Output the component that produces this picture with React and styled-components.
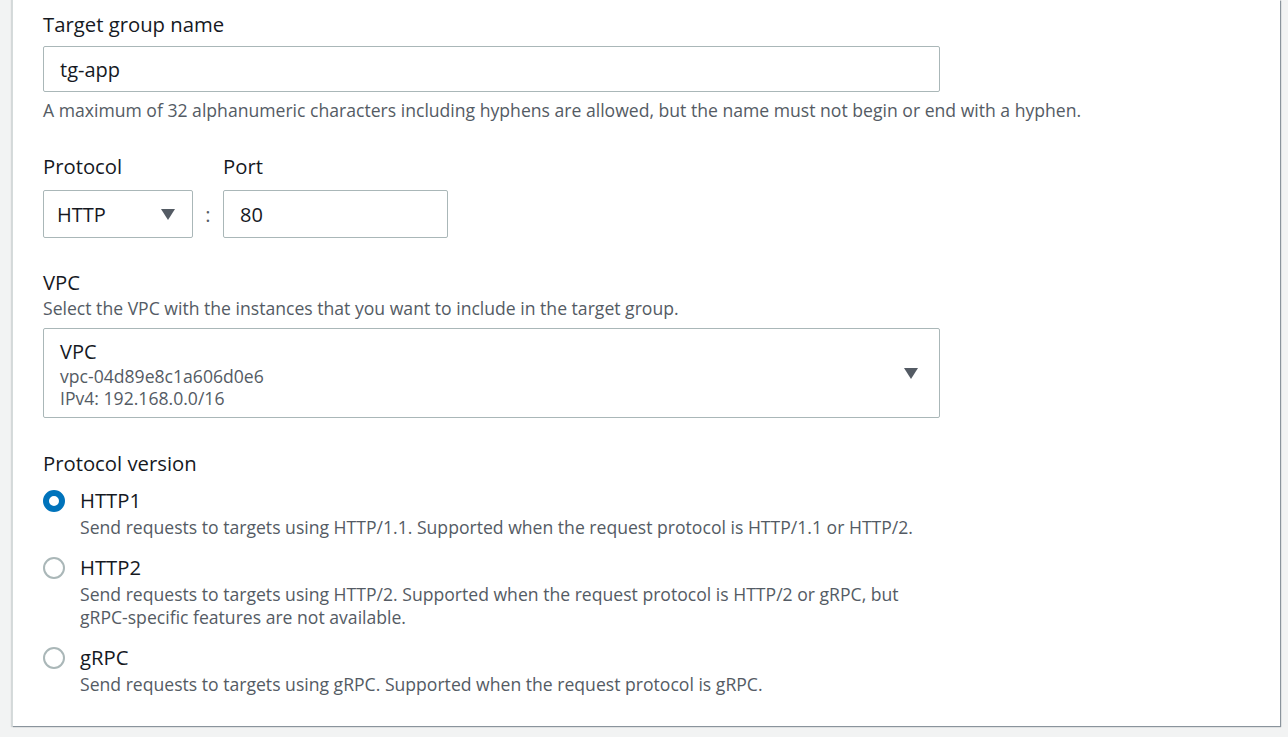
import styled, { createGlobalStyle } from "styled-components";

const Global = createGlobalStyle`
  html, body {
    margin: 0;
    padding: 0;
    background: #f2f3f3;
    font-family: "Open Sans", "Noto Sans", sans-serif;
    color: #16191f;
  }
`;

const Page = styled.div`
  width: 1288px;
  height: 737px;
  overflow: hidden;
  padding: 0 8px 0 12px;
  box-sizing: border-box;
`;

const Card = styled.section`
  background: #fff;
  border-left: 1px solid #d5dbdb;
  box-shadow: 1px 1px 1px 0 rgba(0, 22, 43, 0.35), 0 0 1px 1px rgba(0, 28, 36, 0.12);
  padding: 10px 30px 30px;
  display: flex;
  flex-direction: column;
`;

const Field = styled.div`
  display: flex;
  flex-direction: column;
  margin-bottom: ${(p) => p.$gap || 0}px;
`;

const Label = styled.div`
  font-size: 20.3px;
  line-height: 28px;
  color: #16191f;
  width: ${(p) => (p.$w ? `${p.$w}px` : "auto")};
`;

const Hint = styled.div`
  font-size: 17.6px;
  line-height: 23px;
  color: #545b64;
  margin-top: ${(p) => p.$mt || 0}px;
`;

const TextBox = styled.div`
  width: ${(p) => p.$w}px;
  height: ${(p) => p.$h}px;
  box-sizing: border-box;
  border: 1px solid #aab7b8;
  border-radius: 2px;
  padding: 0 16px;
  display: flex;
  align-items: center;
  font-size: 20px;
  color: #16191f;
  margin-top: ${(p) => p.$mt || 0}px;
  margin-bottom: ${(p) => p.$mb || 0}px;
`;

const Row = styled.div`
  display: flex;
`;

const InputRow = styled.div`
  display: flex;
  align-items: center;
  margin-top: 10px;
`;

const Colon = styled.span`
  width: 30px;
  text-align: center;
  font-size: 20px;
  color: #545b64;
`;

const SelectBox = styled(TextBox)`
  justify-content: space-between;
  padding: 0 16px 0 13px;
`;

const Caret = styled.svg`
  width: 16px;
  height: 14px;
  fill: #545b64;
  flex: none;
`;

const VpcBox = styled.div`
  width: 897px;
  height: 90px;
  box-sizing: border-box;
  border: 1px solid #aab7b8;
  border-radius: 2px;
  padding: 0 20px 0 16px;
  display: flex;
  align-items: center;
  justify-content: space-between;
  margin-top: 8px;
  margin-bottom: 31px;
`;

const VpcText = styled.div`
  display: flex;
  flex-direction: column;
  align-self: flex-start;
  padding-top: 8px;
`;

const VpcTitle = styled.div`
  font-size: 20px;
  line-height: 29px;
`;

const VpcMeta = styled.div`
  font-size: 17.6px;
  line-height: 21.5px;
  color: #545b64;
`;

const RadioGroup = styled.div`
  display: flex;
  flex-direction: column;
  gap: 13px;
  margin-top: 8px;
`;

const RadioItem = styled.label`
  display: flex;
  gap: 15px;
`;

const RadioDot = styled.span`
  width: 22px;
  height: 22px;
  box-sizing: border-box;
  border-radius: 50%;
  flex: none;
  margin-top: 5px;
  background: #fff;
  border: ${(p) => (p.$on ? "6px solid #0073bb" : "2px solid #aab7b8")};
`;

const RadioBody = styled.div`
  display: flex;
  flex-direction: column;
`;

const RadioTitle = styled.div`
  font-size: 20.3px;
  line-height: 31px;
`;

function Arrow() {
  return (
    <Caret viewBox="0 0 16 14">
      <path d="M1 2h14L8 13z" />
    </Caret>
  );
}

const versions = [
  {
    id: "HTTP1",
    on: true,
    desc: [
      "Send requests to targets using HTTP/1.1. Supported when the request protocol is HTTP/1.1 or HTTP/2.",
    ],
  },
  {
    id: "HTTP2",
    desc: [
      "Send requests to targets using HTTP/2. Supported when the request protocol is HTTP/2 or gRPC, but",
      "gRPC-specific features are not available.",
    ],
  },
  {
    id: "gRPC",
    desc: ["Send requests to targets using gRPC. Supported when the request protocol is gRPC."],
  },
];

export default function App() {
  return (
    <Page>
      <Global />
      <Card>
        <Field $gap={30}>
          <Label>Target group name</Label>
          <TextBox $w={897} $h={46} $mt={8} $mb={7}>
            tg-app
          </TextBox>
          <Hint>
            A maximum of 32 alphanumeric characters including hyphens are allowed, but the name must not
            begin or end with a hyphen.
          </Hint>
        </Field>

        <Field $gap={30}>
          <Row>
            <Label $w={180}>Protocol</Label>
            <Label>Port</Label>
          </Row>
          <InputRow>
            <SelectBox $w={150} $h={48}>
              HTTP
              <Arrow />
            </SelectBox>
            <Colon>:</Colon>
            <TextBox $w={225} $h={48}>
              80
            </TextBox>
          </InputRow>
        </Field>

        <Field>
          <Label>VPC</Label>
          <Hint $mt={1}>Select the VPC with the instances that you want to include in the target group.</Hint>
          <VpcBox>
            <VpcText>
              <VpcTitle>VPC</VpcTitle>
              <VpcMeta>vpc-04d89e8c1a606d0e6</VpcMeta>
              <VpcMeta>IPv4: 192.168.0.0/16</VpcMeta>
            </VpcText>
            <Arrow />
          </VpcBox>
        </Field>

        <Field>
          <Label>Protocol version</Label>
          <RadioGroup>
            {versions.map((v) => (
              <RadioItem key={v.id}>
                <RadioDot $on={v.on} />
                <RadioBody>
                  <RadioTitle>{v.id}</RadioTitle>
                  {v.desc.map((d) => (
                    <Hint key={d}>{d}</Hint>
                  ))}
                </RadioBody>
              </RadioItem>
            ))}
          </RadioGroup>
        </Field>
      </Card>
    </Page>
  );
}
